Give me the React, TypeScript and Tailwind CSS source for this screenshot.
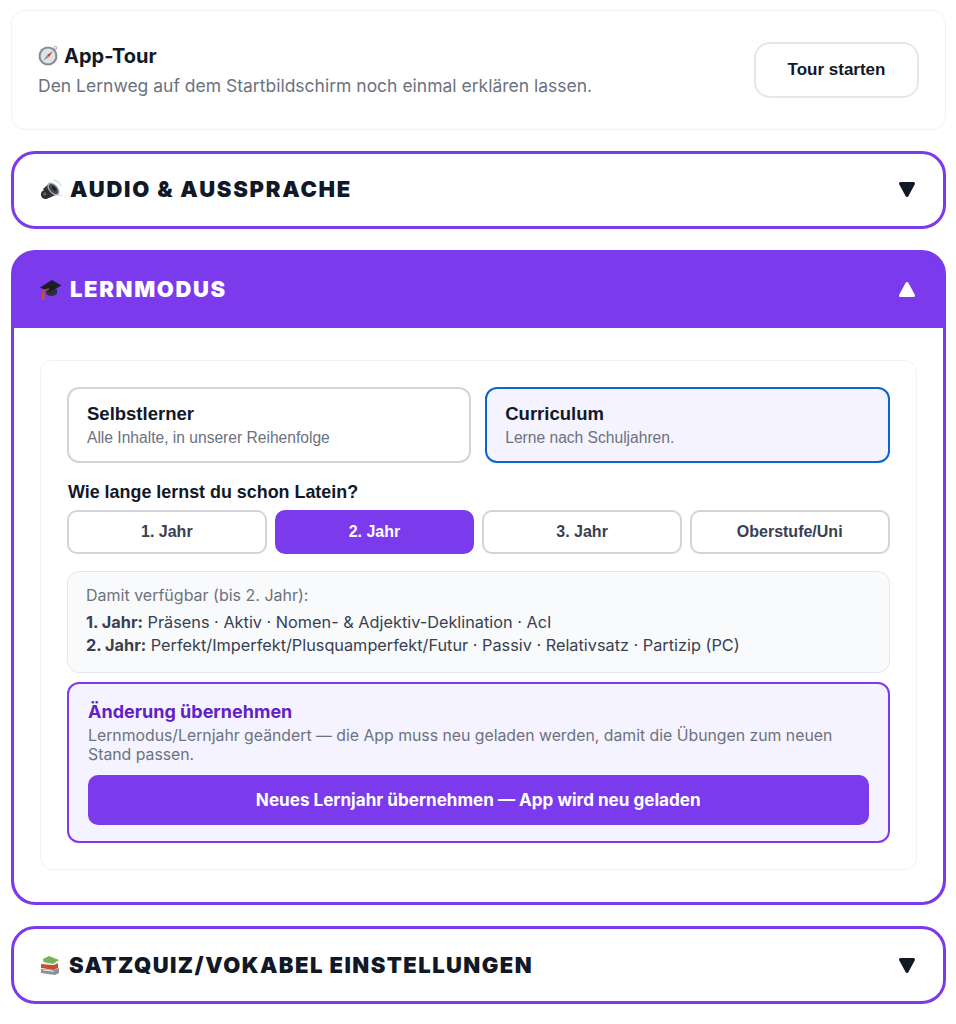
const inter = "font-['Inter',sans-serif]";
const arial = "font-['Liberation_Sans',Arial,sans-serif]";

function Compass() {
  return (
    <svg width="21" height="21" viewBox="0 0 21 21" className="shrink-0">
      <circle cx="17.5" cy="2.8" r="1.5" fill="none" stroke="#a3a8ae" strokeWidth="1" />
      <circle cx="10" cy="11" r="9.5" fill="#868c93" />
      <circle cx="10" cy="11" r="7.4" fill="#dfe2e6" />
      <path d="M14.8 6.2L9 10l2 2z" fill="#cf4026" />
      <path d="M5.2 15.8L9 10l2 2z" fill="#8d9399" />
    </svg>
  );
}
function Speaker() {
  return (
    <svg width="23" height="22" viewBox="0 0 23 22" className="shrink-0">
      <path d="M13 0.8q6 1 8.5 6.5" stroke="#d5d8dd" strokeWidth="1.2" fill="none" />
      <path d="M18.5 16q2.5 .5 4 0" stroke="#d5d8dd" strokeWidth="1.2" fill="none" />
      <path d="M3 10L10 3.5 19 14.5 9 19z" fill="#34373d" />
      <ellipse cx="13.5" cy="10" rx="4.6" ry="7.6" transform="rotate(-42 13.5 10)" fill="#a9aeb6" />
      <ellipse cx="13.5" cy="10" rx="3.3" ry="6" transform="rotate(-42 13.5 10)" fill="#43474e" />
      <ellipse cx="14" cy="9.5" rx="1.5" ry="2.8" transform="rotate(-42 14 9.5)" fill="#1f2126" />
      <circle cx="5.5" cy="15.5" r="4.6" fill="#2b2d32" />
      <circle cx="4.8" cy="15" r="1.8" fill="#5c6068" />
    </svg>
  );
}
function Cap() {
  return (
    <svg width="22" height="22" viewBox="0 0 22 22" className="shrink-0">
      <path d="M6 10v5q5 4 11 0v-5z" fill="#2c303a" />
      <path d="M0 8.5L12 1l9.5 5.5L9.5 13z" fill="#1b1e27" />
      <path d="M9 10L3 12v7" stroke="#b8552a" strokeWidth="1.6" fill="none" />
      <path d="M1.8 14h2.6l.3 7H1.5z" fill="#c4562a" />
    </svg>
  );
}
function Books() {
  return (
    <svg width="20" height="20" viewBox="0 0 20 20" className="shrink-0">
      <path d="M1 14l14 1 4-2v5l-4 2-14-2z" fill="#8b9097" />
      <path d="M1 9l13 1 4-2v5l-4 2-13-2z" fill="#c5502f" />
      <path d="M3 4l6-3 10 4-6 4-10-2z" fill="#74b35a" />
      <path d="M3 4v3l10 2 1 1-10-1z" fill="#e7e7e2" />
      <path d="M3 14.5l11 1.3v1L3 15.5z" fill="#eceff2" />
    </svg>
  );
}
function Tri({ up = false, white = false }: { up?: boolean; white?: boolean }) {
  return (
    <svg width="18" height="17" viewBox="0 0 18 17" className="shrink-0">
      <path
        d={up ? "M9 2.5L15.5 14.5H2.5Z" : "M2.5 2.5H15.5L9 14.5Z"}
        fill={white ? "#ffffff" : "#111827"}
        stroke={white ? "#ffffff" : "#111827"}
        strokeWidth="3"
        strokeLinejoin="round"
      />
    </svg>
  );
}

function Collapsed({ icon, title, gap, h, track }: { icon: React.ReactNode; title: string; gap: string; h: string; track: string }) {
  return (
    <div className={`${h} rounded-[24px] border-[3px] border-[#7c3aed] bg-white pl-[26px] pr-[27px] flex items-center justify-between`}>
      <div className={`flex items-center ${gap}`}>
        {icon}
        <span className={`${inter} text-[22px] font-black ${track} text-[#111827]`}>{title}</span>
      </div>
      <Tri />
    </div>
  );
}

function Mode({ title, sub, active }: { title: string; sub: string; active?: boolean }) {
  return (
    <div
      className={`flex-1 h-[76px] rounded-[12px] border-2 pl-[18px] flex flex-col justify-center ${arial} ${
        active ? "border-[#0a66cc] bg-[#f5f3ff]" : "border-[#d1d5db] bg-white"
      }`}
    >
      <div className="text-[18.5px] leading-[24px] font-bold text-[#111827]">{title}</div>
      <div className="mt-[1px] text-[15.6px] leading-[22px] text-[#6b7280]">{sub}</div>
    </div>
  );
}

function Year({ label, active }: { label: string; active?: boolean }) {
  return (
    <div
      className={`h-[44px] rounded-[10px] border-2 flex items-center justify-center text-[16px] font-bold ${arial} ${
        active ? "border-[#7c3aed] bg-[#7c3aed] text-white" : "border-[#d1d5db] bg-white text-[#374151]"
      }`}
    >
      {label}
    </div>
  );
}

export default function App() {
  return (
    <div className="w-[956px] h-[1024px] overflow-hidden bg-white pt-[10px] pl-[11px] pr-[10px] flex flex-col gap-[21.5px]">
      <div className="h-[119.5px] shrink-0 rounded-[14px] border border-[#f1f2f4] bg-white pl-[26px] pr-[26px] flex items-center justify-between">
        <div className="pt-[1px]">
          <div className="flex items-center gap-[5px] h-[26px]">
            <Compass />
            <span className={`${inter} text-[20px] font-bold text-[#111827]`}>App-Tour</span>
          </div>
          <div className={`${inter} mt-[5px] text-[17.5px] leading-[24px] text-[#6b7280]`}>
            Den Lernweg auf dem Startbildschirm noch einmal erklären lassen.
          </div>
        </div>
        <div className={`w-[165px] h-[56px] rounded-[16px] border-2 border-[#e5e7eb] bg-white flex items-center justify-center text-[17px] font-bold text-[#111827] ${arial}`}>
          Tour starten
        </div>
      </div>

      <Collapsed icon={<Speaker />} title="AUDIO & AUSSPRACHE" gap="gap-[7px]" h="h-[77.5px]" track="tracking-[1.75px]" />

      <div className="h-[654.5px] shrink-0 rounded-[24px] border-[3px] border-[#7c3aed] bg-[#7c3aed] overflow-hidden flex flex-col">
        <div className="h-[75px] shrink-0 bg-[#7c3aed] pl-[26px] pr-[27px] pb-[2px] flex items-center justify-between">
          <div className="flex items-center gap-[8px]">
            <Cap />
            <span className={`${inter} text-[22px] font-black tracking-[1.65px] text-white`}>LERNMODUS</span>
          </div>
          <Tri up white />
        </div>
        <div className="flex-1 bg-white rounded-b-[21px] pt-[32px] pl-[26px] pr-[26px]">
          <div className="h-[510px] rounded-[12px] border border-[#f1f2f4] bg-white pl-[26px] pr-[26.5px] pt-[26px]">
            <div className="flex gap-[14px]">
              <Mode title="Selbstlerner" sub="Alle Inhalte, in unserer Reihenfolge" />
              <Mode title="Curriculum" sub="Lerne nach Schuljahren." active />
            </div>
            <div className={`${arial} ml-[1px] mt-[17px] text-[17.9px] leading-[24px] font-bold text-[#111827]`}>
              Wie lange lernst du schon Latein?
            </div>
            <div className="mt-[6px] grid grid-cols-4 gap-[8px]">
              <Year label="1. Jahr" />
              <Year label="2. Jahr" active />
              <Year label="3. Jahr" />
              <Year label="Oberstufe/Uni" />
            </div>
            <div className={`${inter} mt-[17px] h-[102px] rounded-[12px] border border-[#e5e7eb] bg-[#f9fafb] pl-[18px] pt-[13px]`}>
              <div className="text-[16px] leading-[20px] text-[#6b7280]">Damit verfügbar (bis 2. Jahr):</div>
              <div className="mt-[6px] text-[16.3px] leading-[23px] text-[#374151]">
                <div>
                  <b className="font-bold">1. Jahr:</b> Präsens · Aktiv · Nomen- &amp; Adjektiv-Deklination · AcI
                </div>
                <div>
                  <b className="font-bold">2. Jahr:</b> Perfekt/Imperfekt/Plusquamperfekt/Futur · Passiv · Relativsatz · Partizip (PC)
                </div>
              </div>
            </div>
            <div className={`${inter} mt-[9px] h-[161px] rounded-[12px] border-2 border-[#7c3aed] bg-[#f5f3ff] px-[19px] pt-[16px]`}>
              <div className="text-[18px] leading-[24px] font-bold text-[#6221c4]">Änderung übernehmen</div>
              <div className="mt-[2px] text-[15.8px] leading-[19px] text-[#6b7280]">
                Lernmodus/Lernjahr geändert — die App muss neu geladen werden, damit die Übungen zum neuen Stand passen.
              </div>
              <div className="mt-[11px] h-[50px] rounded-[10px] bg-[#7c3aed] flex items-center justify-center text-[17.1px] font-bold text-white">
                Neues Lernjahr übernehmen — App wird neu geladen
              </div>
            </div>
          </div>
        </div>
      </div>

      <Collapsed icon={<Books />} title="SATZQUIZ/VOKABEL EINSTELLUNGEN" gap="gap-[9px]" h="h-[78px]" track="tracking-[1.44px]" />
    </div>
  );
}
